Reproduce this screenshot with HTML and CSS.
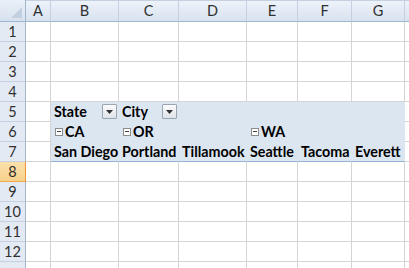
FILE: index.html
```html
<!DOCTYPE html>
<html>
<head>
<meta charset="utf-8">
<link rel="stylesheet" href="styles.css">
</head>
<body>
<div class="sheet">
  <div class="corner"><span class="tri"></span></div>
  <div class="ch">A</div><div class="ch">B</div><div class="ch">C</div><div class="ch">D</div><div class="ch">E</div><div class="ch">F</div><div class="ch">G</div><div class="ch end"></div>

  <div class="rh">1</div><div class="c"></div><div class="c"></div><div class="c"></div><div class="c"></div><div class="c"></div><div class="c"></div><div class="c"></div><div class="c end"></div>
  <div class="rh">2</div><div class="c"></div><div class="c"></div><div class="c"></div><div class="c"></div><div class="c"></div><div class="c"></div><div class="c"></div><div class="c end"></div>
  <div class="rh">3</div><div class="c"></div><div class="c"></div><div class="c"></div><div class="c"></div><div class="c"></div><div class="c"></div><div class="c"></div><div class="c end"></div>
  <div class="rh">4</div><div class="c"></div><div class="c"></div><div class="c"></div><div class="c"></div><div class="c"></div><div class="c"></div><div class="c"></div><div class="c end"></div>

  <div class="rh">5</div><div class="c"></div>
  <div class="c pv fld"><span>State</span><span class="dd"><svg width="7" height="4" viewBox="0 0 7 4"><path d="M0 0H7L3.5 4Z" fill="#333"/></svg></span></div>
  <div class="c pv fld"><span>City</span><span class="dd"><svg width="7" height="4" viewBox="0 0 7 4"><path d="M0 0H7L3.5 4Z" fill="#333"/></svg></span></div>
  <div class="c pv"></div><div class="c pv"></div><div class="c pv"></div><div class="c pv"></div><div class="c end"></div>

  <div class="rh">6</div><div class="c"></div>
  <div class="c pv"><span class="tg"></span>CA</div>
  <div class="c pv"><span class="tg"></span>OR</div>
  <div class="c pv"></div>
  <div class="c pv"><span class="tg"></span>WA</div>
  <div class="c pv"></div><div class="c pv"></div><div class="c end"></div>

  <div class="rh">7</div><div class="c"></div>
  <div class="c pv last">San Diego</div>
  <div class="c pv last">Portland</div>
  <div class="c pv last">Tillamook</div>
  <div class="c pv last">Seattle</div>
  <div class="c pv last">Tacoma</div>
  <div class="c pv last">Everett</div>
  <div class="c end"></div>

  <div class="rh sel">8</div><div class="c"></div><div class="c"></div><div class="c"></div><div class="c"></div><div class="c"></div><div class="c"></div><div class="c"></div><div class="c end"></div>
  <div class="rh">9</div><div class="c"></div><div class="c"></div><div class="c"></div><div class="c"></div><div class="c"></div><div class="c"></div><div class="c"></div><div class="c end"></div>
  <div class="rh">10</div><div class="c"></div><div class="c"></div><div class="c"></div><div class="c"></div><div class="c"></div><div class="c"></div><div class="c"></div><div class="c end"></div>
  <div class="rh">11</div><div class="c"></div><div class="c"></div><div class="c"></div><div class="c"></div><div class="c"></div><div class="c"></div><div class="c"></div><div class="c end"></div>
  <div class="rh">12</div><div class="c"></div><div class="c"></div><div class="c"></div><div class="c"></div><div class="c"></div><div class="c"></div><div class="c"></div><div class="c end"></div>
  <div class="rh"></div><div class="c"></div><div class="c"></div><div class="c"></div><div class="c"></div><div class="c"></div><div class="c"></div><div class="c"></div><div class="c end"></div>
</div>
</body>
</html>
```
FILE: styles.css
```css
html, body {
  margin: 0;
  padding: 0;
  background: #fff;
  overflow: hidden;
}
.sheet {
  display: grid;
  grid-template-columns: 26px 25px 68px 60px 68px 51px 54px 53px 20px;
  grid-template-rows: 22px repeat(13, 20px);
  width: 409px;
  height: 268px;
  overflow: hidden;
  font-family: Lato, "Open Sans", sans-serif;
}
.sheet > div {
  box-sizing: border-box;
  border-right: 1px solid #d4d4d4;
  border-bottom: 1px solid #d4d4d4;
  min-width: 0;
  white-space: nowrap;
}
.corner {
  position: relative;
  background: linear-gradient(#eaf0f8, #d7e1ee);
  border-right-color: #9eb6ce !important;
  border-bottom-color: #9eb6ce !important;
}
.tri {
  position: absolute;
  right: 3px;
  bottom: 3px;
  width: 0;
  height: 0;
  border-left: 11px solid transparent;
  border-bottom: 11px solid #c2cfdf;
}
.ch {
  background: linear-gradient(#eef3fa 0%, #e4ebf5 45%, #d8e2ef 100%);
  border-top: 1px solid #c5d1e0;
  border-right-color: #c5d1e0 !important;
  border-bottom-color: #9eb6ce !important;
  color: #303030;
  font-size: 14.5px;
  text-align: center;
  line-height: 20px;
}
.rh {
  background: #e3eaf4;
  border-right-color: #9eb6ce !important;
  border-bottom-color: #c5d1e0 !important;
  color: #303030;
  font-size: 14.5px;
  text-align: center;
  line-height: 20px;
}
.rh.sel {
  background: linear-gradient(#fbe0ab, #f8d28c);
  border-right-color: #f29536 !important;
  border-bottom-color: #f2a949 !important;
}
.c {
  background: #fff;
}
.pv {
  background: #dce6f1;
  border-right-color: #dce6f1 !important;
  border-bottom-color: #dce6f1 !important;
  font-weight: bold;
  font-size: 14.3px;
  color: #000;
  line-height: 20px;
  padding-left: 3px;
  overflow: visible;
}
.pv.last {
  border-bottom-color: #95b3d7 !important;
}
.fld {
  display: flex;
  justify-content: space-between;
  align-items: flex-start;
  padding-right: 1px;
}
.dd {
  box-sizing: border-box;
  width: 15px;
  height: 15px;
  margin-top: 2px;
  border: 1px solid #9aa5b3;
  border-radius: 1px;
  background: linear-gradient(#fbfbfc, #dfe3e8);
  display: flex;
  align-items: center;
  justify-content: center;
}
.tg {
  display: inline-block;
  box-sizing: border-box;
  width: 8px;
  height: 8px;
  border: 1px solid #8c8c8c;
  background: #fff;
  position: relative;
  margin-right: 2px;
  margin-left: 1px;
  vertical-align: 1px;
}
.tg::after {
  content: "";
  position: absolute;
  left: 1px;
  top: 2px;
  width: 4px;
  height: 1px;
  background: #444;
}
```
